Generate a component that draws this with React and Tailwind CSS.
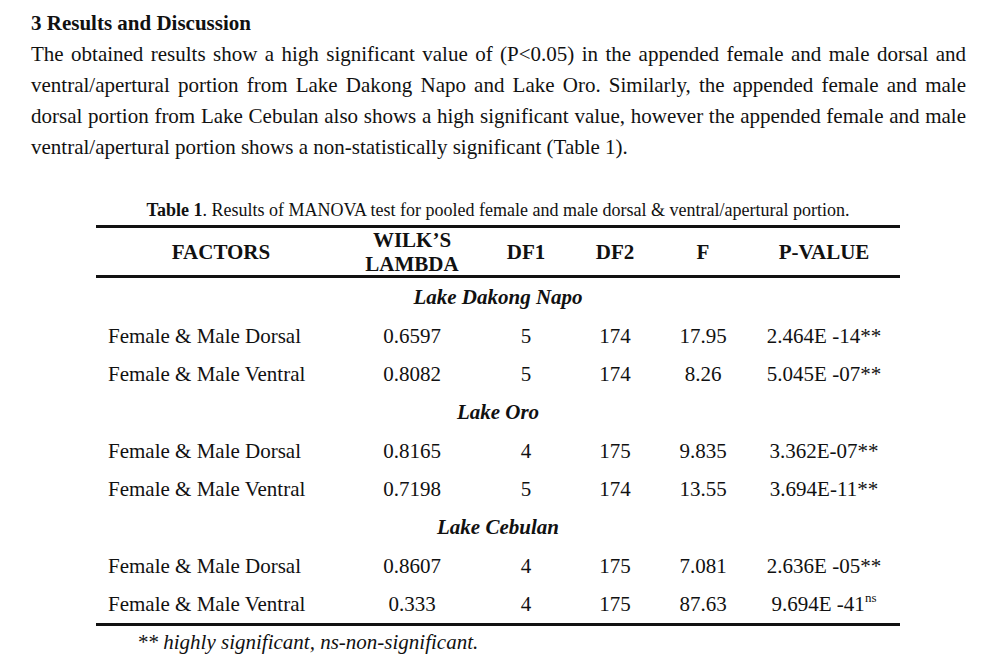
import React from "react";

const serif = { fontFamily: '"Liberation Serif", "Times New Roman", serif' };

const groups = [
  {
    name: "Lake Dakong Napo",
    rows: [
      ["Female & Male Dorsal", "0.6597", "5", "174", "17.95", "2.464E -14**"],
      ["Female & Male Ventral", "0.8082", "5", "174", "8.26", "5.045E -07**"],
    ],
  },
  {
    name: "Lake Oro",
    rows: [
      ["Female & Male Dorsal", "0.8165", "4", "175", "9.835", "3.362E-07**"],
      ["Female & Male Ventral", "0.7198", "5", "174", "13.55", "3.694E-11**"],
    ],
  },
  {
    name: "Lake Cebulan",
    rows: [
      ["Female & Male Dorsal", "0.8607", "4", "175", "7.081", "2.636E -05**"],
      ["Female & Male Ventral", "0.333", "4", "175", "87.63", "NS"],
    ],
  },
];

function Row({ r }) {
  return (
    <div className="flex h-[38.33px] items-center pt-[2px] text-[21px]">
      <div className="w-[250px] pl-[12px]">{r[0]}</div>
      <div className="w-[132px] text-center">{r[1]}</div>
      <div className="w-[96px] text-center">{r[2]}</div>
      <div className="w-[82px] text-center">{r[3]}</div>
      <div className="w-[94px] text-center">{r[4]}</div>
      <div className="w-[148px] text-center">
        {r[5] === "NS" ? (
          <span>
            9.694E -41<span className="text-[13px] relative -top-[9px]">ns</span>
          </span>
        ) : (
          r[5]
        )}
      </div>
    </div>
  );
}

export default function App() {
  return (
    <div className="w-[993px] h-[671px] bg-white text-[#111]" style={serif}>
      <div className="pl-[31px] pr-[27px] pt-[10px]">
        <h2 className="text-[21px] font-bold leading-[26px]">3 Results and Discussion</h2>
        <p className="text-[21px] leading-[31px] text-justify mt-[3px]">
          The obtained results show a high significant value of (P&lt;0.05) in the appended female and male dorsal and
          ventral/apertural portion from Lake Dakong Napo and Lake Oro. Similarly, the appended female and male
          dorsal portion from Lake Cebulan also shows a high significant value, however the appended female and male
          ventral/apertural portion shows a non-statistically significant (Table 1).
        </p>
      </div>

      <div className="ml-[96px] w-[804px] mt-[37px]">
        <div className="text-center text-[18px] leading-[20px]">
          <span className="font-bold">Table 1</span>. Results of MANOVA test for pooled female and male dorsal &amp; ventral/apertural portion.
        </div>
        <div className="mt-[5px] border-t-[3px] border-b-[3px] border-[#111]">
          <div className="flex h-[47px] items-center text-[21px] font-bold leading-[24px]">
            <div className="w-[250px] text-center">FACTORS</div>
            <div className="w-[132px] text-center">
              WILK’S
              <br />
              LAMBDA
            </div>
            <div className="w-[96px] text-center">DF1</div>
            <div className="w-[82px] text-center">DF2</div>
            <div className="w-[94px] text-center">F</div>
            <div className="w-[148px] text-center">P-VALUE</div>
          </div>
        </div>
        <div className="border-b-[3px] border-[#111]">
          {groups.map((g) => (
            <div key={g.name}>
              <div className="flex h-[38.33px] items-center justify-center pt-[2px] text-[21px] font-bold italic">
                {g.name}
              </div>
              {g.rows.map((r, i) => (
                <Row key={i} r={r} />
              ))}
            </div>
          ))}
        </div>
        <div className="pl-[41px] text-[21px] italic leading-[32px]">
          ** highly significant, ns-non-significant.
        </div>
      </div>
    </div>
  );
}
